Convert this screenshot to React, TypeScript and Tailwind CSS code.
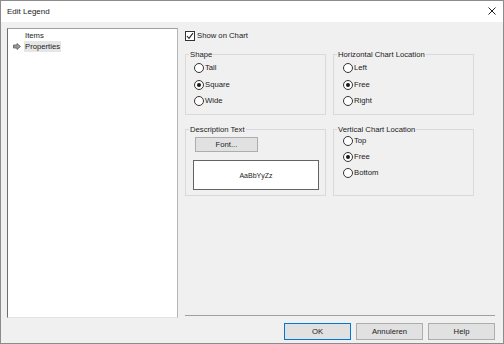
function Radio({ label, checked = false, h = 'h-[16.5px]' }: { label: string; checked?: boolean; h?: string }) {
  return (
    <div className={`flex items-center gap-[1px] ${h}`}>
      <span className="grid h-[10px] w-[10px] place-items-center rounded-full border border-[#333] bg-white">
        {checked && <span className="h-[4px] w-[4px] rounded-full bg-[#1a1a1a]" />}
      </span>
      <span>{label}</span>
    </div>
  )
}

function Group({ title, className = '', children }: { title: string; className?: string; children: React.ReactNode }) {
  return (
    <fieldset className={`m-0 min-w-0 border border-[#d9d9d9] p-0 ${className}`}>
      <legend className="ml-[3px] px-[1px] leading-[9px]">{title}</legend>
      {children}
    </fieldset>
  )
}

function Btn({ label, focus = false, className = '' }: { label: string; focus?: boolean; className?: string }) {
  return (
    <button
      className={`grid place-items-center border bg-[#e1e1e1] leading-none ${focus ? 'border-[#0078d7]' : 'border-[#adadad]'} ${className}`}
    >
      {label}
    </button>
  )
}

export default function App() {
  return (
    <div className="flex h-[344px] w-[504px] flex-col border border-[#8c8c8c] bg-[#f0f0f0] font-['Liberation_Sans',Arial,sans-serif] text-[7.7px] leading-none text-[#1b1b1b]">
      {/* Title bar */}
      <div className="flex h-[21px] items-center justify-between bg-white pl-[6px] pr-[7px]">
        <span className="text-[8px]">Edit Legend</span>
        <svg width="8" height="8" viewBox="0 0 8 8" className="mb-[1px]">
          <path d="M0.5 0.5 L7.5 7.5 M7.5 0.5 L0.5 7.5" stroke="#222" strokeWidth="1" />
        </svg>
      </div>

      <div className="flex flex-1 flex-col px-[6px] pb-[3px] pt-[6px]">
        <div className="flex h-[290px] gap-[7px]">
          {/* Tree */}
          <div className="w-[171px] border border-b-[#e3e3e3] border-l-[#6d6d6d] border-r-[#b4b4b4] border-t-[#a0a0a0] bg-white pt-[1px]">
            <div className="flex h-[11px] items-center">
              <span className="ml-[5px] w-[11px]" />
              <span className="px-[1px]">Items</span>
            </div>
            <div className="flex h-[11px] items-center">
              <span className="ml-[5px] flex w-[11px] items-center">
                <svg width="8" height="7" viewBox="0 0 8 7">
                  <path d="M0.5 2 H4 V0.5 L7.5 3.5 L4 6.5 V5 H0.5 Z" fill="#9a9a9a" stroke="#5a5a5a" strokeWidth="0.8" />
                </svg>
              </span>
              <span className="flex h-[11px] items-center bg-[#e6e6e6] px-[1px]">Properties</span>
            </div>
          </div>

          {/* Right panel */}
          <div className="flex flex-1 flex-col">
            <div className="mt-[3px] flex h-[10px] items-center gap-[2px]">
              <span className="grid h-[10px] w-[10px] place-items-center border border-[#333] bg-white">
                <svg width="8" height="8" viewBox="0 0 8 8">
                  <path d="M1 4 L3 6.3 L7 1.2" fill="none" stroke="#222" strokeWidth="1.1" />
                </svg>
              </span>
              <span>Show on Chart</span>
            </div>

            <div className="mt-[9px] grid grid-cols-[141px_141px] gap-x-[7px] gap-y-[10px]">
              <Group title="Shape" className="h-[65px]">
                <div className="mt-[1px] pl-[8px]">
                  <Radio label="Tall" />
                  <Radio label="Square" checked />
                  <Radio label="Wide" />
                </div>
              </Group>
              <Group title="Horizontal Chart Location" className="h-[65px]">
                <div className="mt-[1px] pl-[9px]">
                  <Radio label="Left" />
                  <Radio label="Free" checked />
                  <Radio label="Right" />
                </div>
              </Group>
              <Group title="Description Text" className="h-[71px]">
                <div className="pl-[7px]">
                  <Btn label="Font..." className="ml-[2px] mt-[3px] h-[15px] w-[63px]" />
                  <div className="mt-[8px] grid h-[30px] w-[126px] place-items-center border border-[#646464] bg-white text-[7px]">
                    AaBbYyZz
                  </div>
                </div>
              </Group>
              <Group title="Vertical Chart Location" className="h-[71px]">
                <div className="-mt-[1px] pl-[9px]">
                  <Radio label="Top" h="h-[16px]" />
                  <Radio label="Free" checked h="h-[16px]" />
                  <Radio label="Bottom" h="h-[16px]" />
                </div>
              </Group>
            </div>

            <div className="mb-[2px] mr-[2px] mt-auto h-[1px] bg-[#a0a0a0]" />
          </div>
        </div>

        {/* Buttons */}
        <div className="mt-[5px] flex justify-end gap-[5px] pr-[2px]">
          <Btn label="OK" focus className="h-[17px] w-[67px]" />
          <Btn label="Annuleren" className="h-[17px] w-[67px]" />
          <Btn label="Help" className="h-[17px] w-[67px]" />
        </div>
      </div>
    </div>
  )
}
